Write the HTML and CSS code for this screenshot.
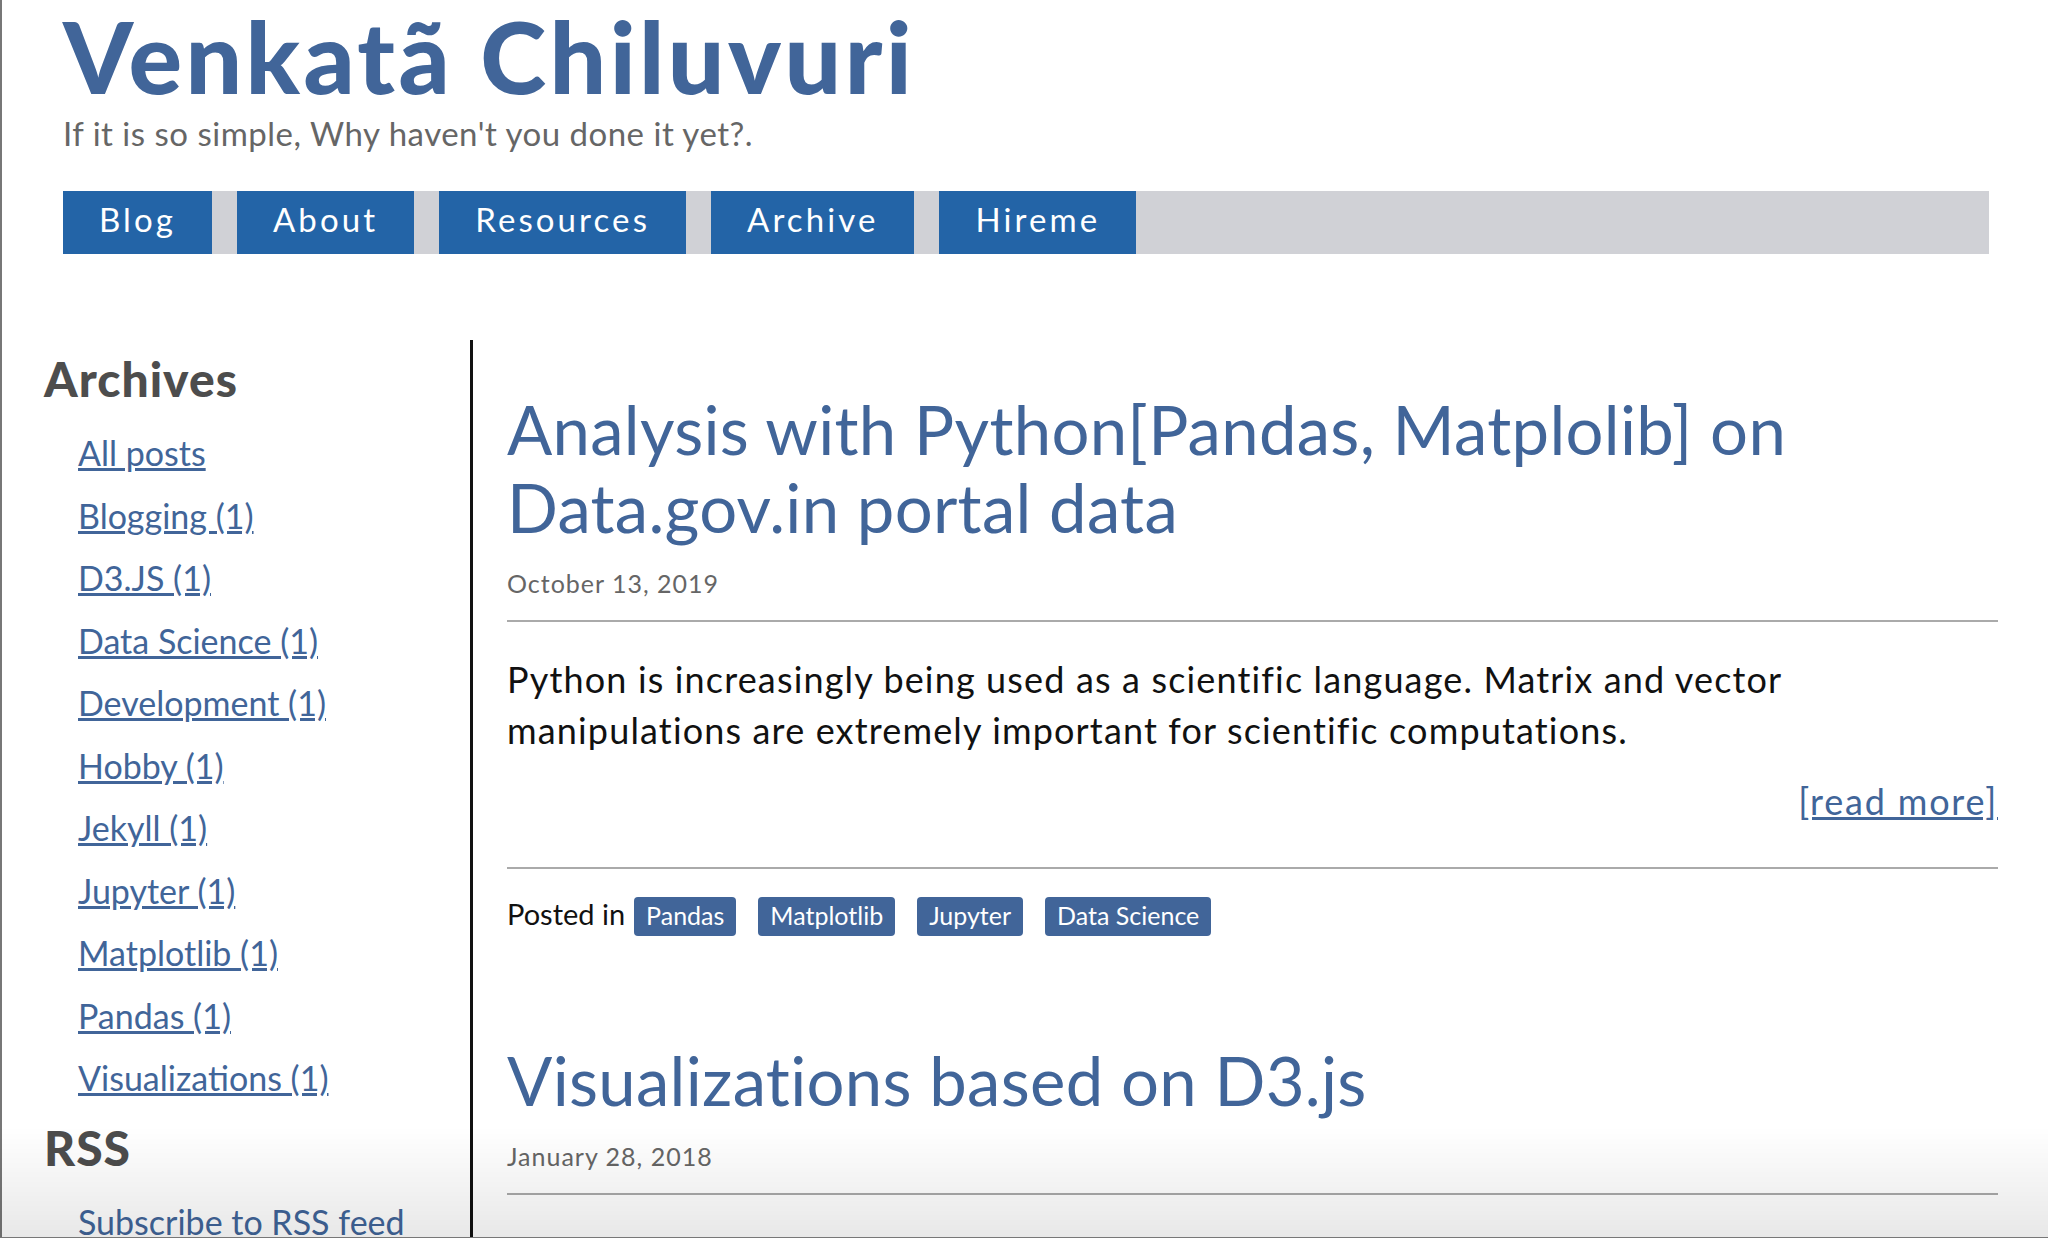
FILE: index.html
```html
<!DOCTYPE html>
<html lang="en">
<head>
<meta charset="utf-8">
<title>Venkatã Chiluvuri</title>
<link rel="stylesheet" href="styles.css">
</head>
<body>
<header class="site-header">
  <h1 class="site-title">Venkatã Chiluvuri</h1>
  <p class="site-tagline">If it is so simple, Why haven't you done it yet?.</p>
  <nav class="nav">
    <a class="nav-item" href="#">Blog</a>
    <a class="nav-item" href="#">About</a>
    <a class="nav-item" href="#">Resources</a>
    <a class="nav-item" href="#">Archive</a>
    <a class="nav-item" href="#">Hireme</a>
  </nav>
</header>
<div class="layout">
  <aside class="sidebar">
    <h2 class="side-heading">Archives</h2>
    <ul class="side-list">
      <li><a href="#">All posts</a></li>
      <li><a href="#">Blogging (1)</a></li>
      <li><a href="#">D3.JS (1)</a></li>
      <li><a href="#">Data Science (1)</a></li>
      <li><a href="#">Development (1)</a></li>
      <li><a href="#">Hobby (1)</a></li>
      <li><a href="#">Jekyll (1)</a></li>
      <li><a href="#">Jupyter (1)</a></li>
      <li><a href="#">Matplotlib (1)</a></li>
      <li><a href="#">Pandas (1)</a></li>
      <li><a href="#">Visualizations (1)</a></li>
    </ul>
    <h2 class="side-heading side-heading-rss">RSS</h2>
    <ul class="side-list">
      <li><a href="#">Subscribe to RSS feed</a></li>
    </ul>
  </aside>
  <main class="main">
    <article class="post">
      <h2 class="post-title"><a href="#">Analysis with Python[Pandas, Matplolib] on Data.gov.in portal data</a></h2>
      <div class="post-date">October 13, 2019</div>
      <hr class="rule">
      <p class="post-excerpt">Python is increasingly being used as a scientific language. Matrix and vector manipulations are extremely important for scientific computations.</p>
      <div class="read-more"><a href="#">[read more]</a></div>
      <hr class="rule rule-tags">
      <div class="post-tags">
        <span class="posted-in">Posted in</span>
        <a class="tag" href="#">Pandas</a>
        <a class="tag" href="#">Matplotlib</a>
        <a class="tag" href="#">Jupyter</a>
        <a class="tag" href="#">Data Science</a>
      </div>
    </article>
    <article class="post">
      <h2 class="post-title"><a href="#">Visualizations based on D3.js</a></h2>
      <div class="post-date">January 28, 2018</div>
      <hr class="rule">
      <p class="post-excerpt">D3.js is a JavaScript library for producing dynamic, interactive data visualizations in web browsers.</p>
    </article>
  </main>
</div>
<div class="screen-shade"></div>
</body>
</html>
```

FILE: styles.css
```css
html, body {
  margin: 0;
  padding: 0;
  background: #ffffff;
}

body {
  font-family: "Lato", "Noto Sans", "Liberation Sans", sans-serif;
  color: #111111;
  border-left: 2px solid #777777;
  min-height: 1238px;
  box-sizing: border-box;
}

a {
  color: #416599;
}

.site-header {
  padding: 5px 59px 0 61px;
}

.site-title {
  margin: 0;
  font-size: 100px;
  line-height: 100px;
  font-weight: 900;
  color: #416599;
  letter-spacing: 3.4px;
}

.site-tagline {
  margin: 8px 0 0 0;
  font-size: 33px;
  line-height: 40px;
  color: #666666;
  letter-spacing: 0.5px;
}

.nav {
  margin-top: 38px;
  display: flex;
  gap: 25px;
  background: #d0d1d6;
  height: 63px;
}

.nav-item {
  display: block;
  height: 63px;
  box-sizing: border-box;
  padding: 0 36px 7px 36px;
  line-height: 56px;
  background: #2364a7;
  color: #ffffff;
  text-decoration: none;
  font-size: 33px;
  letter-spacing: 3.1px;
}

.layout {
  display: flex;
  margin: 86px 50px 0 0;
}

.sidebar {
  flex: none;
  width: 471px;
  border-right: 3px solid #111111;
  padding-left: 42px;
  box-sizing: border-box;
}

.side-heading {
  margin: 10px 0 0 0;
  font-size: 48px;
  line-height: 58px;
  font-weight: 900;
  color: #4d4d4d;
  letter-spacing: 1px;
}

.side-heading-rss {
  margin-top: 9px;
}

.side-list {
  list-style: none;
  margin: 14px 0 0 0;
  padding: 0 0 0 34px;
}

.side-list li {
  font-size: 34px;
  line-height: 62.5px;
}

.main {
  flex: 1;
  padding-left: 34px;
  min-width: 0;
}

.post {
  padding-bottom: 105px;
}

.post-title {
  margin: 50px 0 0 0;
  font-size: 67px;
  line-height: 78px;
  font-weight: 400;
  letter-spacing: 0.3px;
}

.post + .post .post-title {
  margin-top: 0;
}

.post-title a {
  text-decoration: none;
  color: #416599;
}

.post-date {
  margin-top: 22px;
  font-size: 25px;
  line-height: 30px;
  color: #666666;
  letter-spacing: 1px;
}

.rule {
  margin: 22px 0 0 0;
  border: 0;
  height: 2px;
  background: #aaaaaa;
}

.post-excerpt {
  margin: 32px 0 0 0;
  font-size: 36px;
  line-height: 51px;
  color: #111111;
  letter-spacing: 1.15px;
}

.read-more {
  margin-top: 20px;
  text-align: right;
  font-size: 36px;
  line-height: 51px;
  letter-spacing: 1.8px;
}

.rule-tags {
  margin-top: 40px;
}

.post-tags {
  margin-top: 25px;
  display: flex;
  align-items: baseline;
  font-size: 29px;
  line-height: 40px;
}

.tag {
  margin-left: 22px;
  padding: 1px 12px 4px 12px;
  line-height: 34px;
  font-size: 25px;
  background: #416599;
  color: #ffffff;
  text-decoration: none;
  border-radius: 4px;
}

.posted-in + .tag {
  margin-left: 9px;
}

.screen-shade {
  position: fixed;
  left: 0;
  right: 0;
  bottom: 0;
  height: 110px;
  background: linear-gradient(to bottom, rgba(0, 0, 0, 0), rgba(0, 0, 0, 0.09));
  border-bottom: 1px solid #777777;
  pointer-events: none;
}
```
